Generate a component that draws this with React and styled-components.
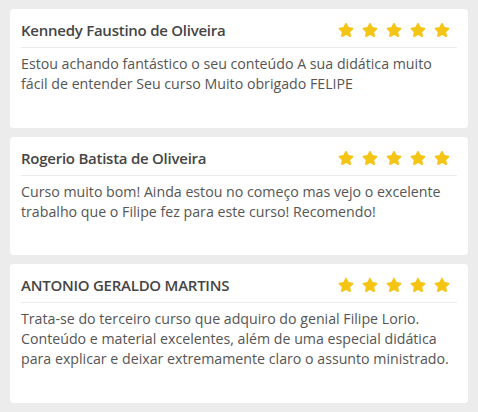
import React from 'react';
import styled, { createGlobalStyle } from 'styled-components';
import { FaStar } from 'react-icons/fa';

const reviews = [
  {
    id: 1,
    name: 'Kennedy Faustino de Oliveira',
    stars: 5,
    text: 'Estou achando fantástico o seu conteúdo A sua didática muito fácil de entender Seu curso Muito obrigado FELIPE',
  },
  {
    id: 2,
    name: 'Rogerio Batista de Oliveira',
    stars: 5,
    text: 'Curso muito bom! Ainda estou no começo mas vejo o excelente trabalho que o Filipe fez para este curso! Recomendo!',
  },
  {
    id: 3,
    name: 'ANTONIO GERALDO MARTINS',
    stars: 5,
    text: 'Trata-se do terceiro curso que adquiro do genial Filipe Lorio. Conteúdo e material excelentes, além de uma especial didática para explicar e deixar extremamente claro o assunto ministrado.',
  },
];

const App = () => (
  <>
    <GlobalStyle />
    <ReviewList>
      {reviews.map(review => (
        <Card key={review.id}>
          <CardHeader>
            <Name>{review.name}</Name>
            <Stars>
              {Array.from({ length: review.stars }).map((_, i) => (
                <FaStar key={i} size={16} />
              ))}
            </Stars>
          </CardHeader>
          <Comment>{review.text}</Comment>
        </Card>
      ))}
    </ReviewList>
  </>
);

const GlobalStyle = createGlobalStyle`
  html, body {
    margin: 0;
    background: #ececec;
    font-family: "Open Sans", "Liberation Sans", sans-serif;
  }
`;

const ReviewList = styled.div`
  display: flex;
  flex-direction: column;
  gap: 9px;
  padding: 9px 10px;
`;

const Card = styled.div`
  background: #ffffff;
  border-radius: 4px;
  padding: 11px 11px 33.5px;
`;

const CardHeader = styled.div`
  display: flex;
  align-items: center;
  justify-content: space-between;
  height: 20px;
  padding-bottom: 7px;
  border-bottom: 1px solid #ebebeb;
`;

const Name = styled.div`
  font-size: 15px;
  font-weight: 600;
  letter-spacing: -0.25px;
  color: #454545;
`;

const Stars = styled.div`
  display: flex;
  gap: 8px;
  margin-right: 7px;
  color: #f4c514;
`;

const Comment = styled.p`
  margin: 6px 0 0;
  font-size: 14.2px;
  line-height: 20px;
  color: #555555;
`;

export default App;
